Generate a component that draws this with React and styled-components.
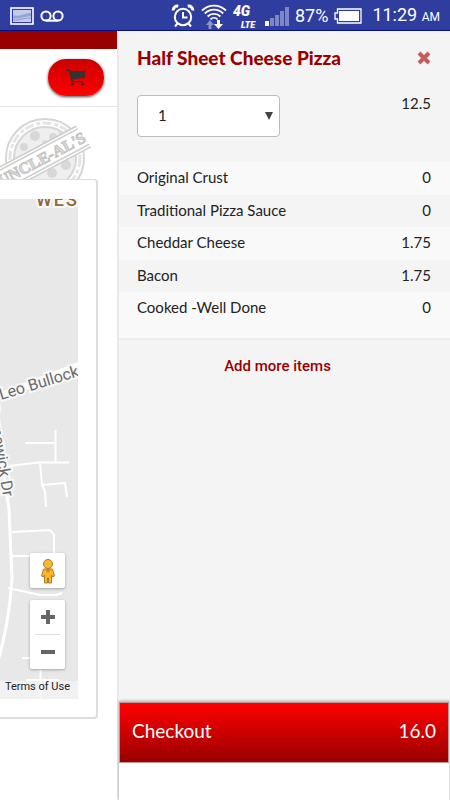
import React from 'react'
import styled, { createGlobalStyle } from 'styled-components'

const items = [
  { name: 'Original Crust', price: '0' },
  { name: 'Traditional Pizza Sauce', price: '0' },
  { name: 'Cheddar Cheese', price: '1.75' },
  { name: 'Bacon', price: '1.75' },
  { name: 'Cooked -Well Done', price: '0' },
]

function StatusBar() {
  return (
    <Status>
      <StatusGroup>
        <svg width="24" height="18" viewBox="0 0 24 18">
          <rect x="1" y="1" width="22" height="16" fill="#2f3d9f" stroke="#fff" strokeWidth="1.6" />
          <rect x="3" y="3" width="18" height="12" fill="#c3cbea" />
          <path d="M3 8c6 3 12-3 18-2v3c-7 0-11 4-18 2z" fill="#97a4d6" />
          <path d="M3 13c6 1 12-3 18-2" stroke="#8d9ad0" fill="none" />
        </svg>
        <svg width="24" height="12" viewBox="0 0 24 12" fill="none" stroke="#fff" strokeWidth="2">
          <circle cx="6" cy="6" r="4.6" />
          <circle cx="18" cy="6" r="4.6" />
          <path d="M6 10.7h12" />
        </svg>
      </StatusGroup>
      <StatusGroup>
        <svg width="24" height="24" viewBox="0 0 24 24" fill="none" stroke="#fff" strokeWidth="2">
          <circle cx="12" cy="13" r="8.2" />
          <path d="M12 8v5.5h4.5M6.5 19.5L4 22.500M17.500 19.500L20 22.500" />
          <path d="M2.200 6.500a4 4 0 0 1 5-4.300M21.800 6.500a4 4 0 0 0-5-4.300" strokeWidth="3" />
        </svg>
        <svg width="26" height="26" viewBox="0 0 26 26" fill="none" stroke="#fff" strokeWidth="1.8">
          <path d="M1 7.500a17 17 0 0 1 24 0M3.800 10.500a13 13 0 0 1 18.400 0M6.600 13.500a9 9 0 0 1 12.800 0M9.500 16.300a5 5 0 0 1 7 0" />
          <path d="M9 17l4 5h-2.500v4h-3v-4H5z" fill="#8a93cc" stroke="none" />
          <path d="M17.500 26l-4.500-5h3v-4h3v4h3z" fill="#fff" stroke="none" />
        </svg>
        <Network>4G<small>LTE</small></Network>
        <svg width="24" height="19" viewBox="0 0 24 19" fill="#7d87c6">
          <rect x="0" y="14" width="4" height="5" fill="#fff" />
          <rect x="5" y="11" width="4" height="8" />
          <rect x="10" y="8" width="4" height="11" />
          <rect x="15" y="4" width="4" height="15" />
          <rect x="20" y="0" width="4" height="19" />
        </svg>
        <Percent>87%</Percent>
        <svg width="28" height="16" viewBox="0 0 28 16">
          <path d="M3.500 1H27v14H3.500v-4H1V5h2.500z" fill="none" stroke="#fff" strokeWidth="1.300" />
          <rect x="5" y="3" width="20" height="10" fill="#fff" />
        </svg>
        <Clock>11:29 <small>AM</small></Clock>
      </StatusGroup>
    </Status>
  )
}

function Stamp() {
  return (
    <StampArea viewBox="0 0 96 72" role="img" aria-label="Uncle Al's">
      <g fill="none" stroke="#d6d6d6">
        <circle cx="45" cy="51" r="39" strokeWidth="2" />
        <circle cx="45" cy="51" r="35" strokeWidth="3" stroke="#e4e4e4" strokeDasharray="9 3 4 2" />
        <circle cx="45" cy="51" r="31" strokeWidth="2" fill="#efefef" />
      </g>
      <g fill="#d8d8d8">
        <circle cx="35" cy="29" r="5" />
        <circle cx="53" cy="30" r="4" />
        <circle cx="24" cy="40" r="4" />
        <circle cx="45" cy="36" r="3" />
        <circle cx="66" cy="58" r="5" />
        <circle cx="52" cy="66" r="5" />
        <path d="M38 40l8-5 3 3-8 5zM58 24l5 4-3 2z" />
      </g>
      <g transform="rotate(-28 44 50)">
        <rect x="-6" y="38" width="98" height="25" fill="#fff" />
        <path d="M-6 38H87M-5 41H87M-4 60h94M-4 63h94" stroke="#cdcdcd" strokeWidth="1.500" />
        <text x="41" y="56" textAnchor="middle" fontFamily="Liberation Serif, serif" fontWeight="700" fontSize="16" fill="#dcdcdc" stroke="#c4c4c4" strokeWidth="1">UNCLE-AL'S</text>
      </g>
    </StampArea>
  )
}

function RoadMap() {
  return (
    <Map>
      <Roads viewBox="0 0 78 501" preserveAspectRatio="xMaxYMin slice">
        <g fill="none" stroke="#fff" strokeWidth="2">
          <path d="M0 197L80 166" strokeWidth="7" />
          <path d="M-4 225L9 310L12 380Q9 425-2 462" strokeWidth="3" />
          <path d="M9 267L38 263.500H69M25 244H55M55.500 231V263M40 263L42 286L45 292L46 308M42 286L65 284L67 298" />
          <path d="M12 333L50 331L54 336V355M12 357H34M8 389L40 396H56L62 394M22 459H32M26 481H59M40.500 471V501" />
        </g>
        <MapLabel x="1" y="201" transform="rotate(-17 1 201)">Leo Bullock</MapLabel>
        <MapLabel x="-13" y="206" transform="rotate(80 -13 206)">Brunswick Dr</MapLabel>
        <Town x="36" y="7">WES</Town>
      </Roads>
      <MapControls>
        <MapButton aria-label="Street View">
          <svg width="16" height="26" viewBox="0 0 16 26">
            <circle cx="8" cy="6" r="4.500" fill="#fbb829" stroke="#a87d2f" />
            <path d="M3.500 11h9l2 7-2 1-1-2v8h-3v-5h-1v5h-3v-8l-1 2-2-1z" fill="#fbb829" stroke="#a87d2f" />
            <path d="M5 11h6l-3 4z" fill="#e77a25" />
          </svg>
        </MapButton>
        <ZoomBox>
          <ZoomButton aria-label="Zoom in">
            <svg width="14" height="14" viewBox="0 0 14 14"><path d="M7 0v14M0 7h14" stroke="#666" strokeWidth="4" /></svg>
          </ZoomButton>
          <ZoomButton aria-label="Zoom out">
            <svg width="14" height="14" viewBox="0 0 14 14"><path d="M0 7h14" stroke="#666" strokeWidth="4" /></svg>
          </ZoomButton>
        </ZoomBox>
      </MapControls>
      <Terms href="#terms">Terms of Use</Terms>
    </Map>
  )
}

function OrderDrawer() {
  return (
    <Drawer>
      <DrawerHeader>
        <Title>Half Sheet Cheese Pizza</Title>
        <CloseButton aria-label="Remove">
          <svg width="14" height="14" viewBox="0 0 14 14"><path d="M2 2l10 10M12 2L2 12" stroke="#c75c5c" strokeWidth="4" /></svg>
        </CloseButton>
      </DrawerHeader>
      <QuantityRow>
        <SelectWrap>
          <Select aria-label="Quantity" defaultValue="1">
            <option>1</option>
            <option>2</option>
            <option>3</option>
          </Select>
          <svg width="8" height="8" viewBox="0 0 8 8"><path d="M0 0h8L4 8z" fill="#444" /></svg>
        </SelectWrap>
        <span>12.5</span>
      </QuantityRow>
      <ItemsBox>
        <Items>
          <tbody>
            {items.map((item) => (
              <tr key={item.name}>
                <td>{item.name}</td>
                <td>{item.price}</td>
              </tr>
            ))}
          </tbody>
        </Items>
      </ItemsBox>
      <AddMore>Add more items</AddMore>
      <Footer>
        <Checkout>
          <span>Checkout</span>
          <span>16.0</span>
        </Checkout>
      </Footer>
    </Drawer>
  )
}

function App() {
  return (
    <Screen>
      <GlobalStyle />
      <StatusBar />
      <Content>
        <Page>
          <TopStrip />
          <PageHeader>
            <CartButton aria-label="Cart">
              <svg width="20" height="17" viewBox="0 0 20 17" fill="#333">
                <path d="M0 .5h4l.8 1.500H19V8.500L6.500 10.500l.4 1.500H17v1.200H5.500L3.200 2H0z" />
                <rect x="5" y="14" width="3" height="2.500" />
                <rect x="15" y="14" width="3" height="2.500" />
              </svg>
            </CartButton>
          </PageHeader>
          <Stamp />
          <MapCard>
            <RoadMap />
          </MapCard>
        </Page>
        <OrderDrawer />
      </Content>
    </Screen>
  )
}

const GlobalStyle = createGlobalStyle`
* {
  box-sizing: border-box;
}
body {
  margin: 0;
  background: white;
  font-family: Lato, sans-serif;
  font-size: 15px;
}
button {
  font: inherit;
  border: none;
  padding: 0;
  cursor: pointer;
}
svg {
  display: block;
  flex-shrink: 0;
}
`;

const Screen = styled.div`
display: flex;
flex-direction: column;
min-height: 100vh;
`;

const Status = styled.header`
display: flex;
align-items: center;
justify-content: space-between;
height: 31px;
padding: 2px 10px 0;
color: white;
background-color: #2f3d9f;
border-bottom: 1px solid #00108c;
font-family: Roboto, sans-serif;
`;
const StatusGroup = styled.div`
display: flex;
align-items: center;
gap: 6px;
`;
const Network = styled.div`
display: flex;
flex-direction: column;
width: 26px;
font: italic 900 14px/17px Roboto, sans-serif;
small{
  font-size: 9px;
  line-height: 10px;
  padding-left: 8px;
}
`;
const Percent = styled.span`
font-size: 18px;
line-height: 24px;
`;
const Clock = styled.span`
font-size: 18px;
line-height: 24px;
margin-left: 4px;
white-space: nowrap;
small{
  font-size: 12px;
}
`;

const Content = styled.main`
flex: 1;
display: grid;
grid-template-columns: 26fr 74fr;
`;

const Page = styled.section`
display: flex;
flex-direction: column;
min-width: 0;
overflow: hidden;
background-color: white;
`;
const TopStrip = styled.div`
height: 18px;
background-color: #990000;
`;
const PageHeader = styled.div`
display: flex;
justify-content: flex-end;
height: 58px;
padding: 10px 13px 0 0;
border-bottom: 1px solid #e5e5e5;
`;
const CartButton = styled.button`
display: flex;
align-items: center;
justify-content: center;
width: 56px;
height: 37px;
border-radius: 18px;
background: linear-gradient(#cc0000, #ff0000);
box-shadow: 0 1px 3px rgba(0, 0, 0, 0.7);
`;
const StampArea = styled.svg`
width: 96px;
height: 72px;
`;
const MapCard = styled.div`
height: 540px;
margin-right: 19px;
padding: 19px 18px 18px 0;
border: 1px solid #dddddd;
border-width: 1px 2px 2px 0;
border-radius: 0 4px 4px 0;
`;
const Map = styled.div`
position: relative;
height: 100%;
background-color: #e8e8e8;
overflow: hidden;
`;
const Roads = styled.svg`
width: 100%;
height: 100%;
`;
const MapLabel = styled.text`
font-family: Roboto, sans-serif;
font-size: 16px;
fill: #6a6a6a;
stroke: #f8f8f8;
stroke-width: 4px;
paint-order: stroke;
`;
const Town = styled(MapLabel)`
font-size: 18px;
font-weight: 500;
letter-spacing: 2px;
fill: #8f6b34;
`;
const MapControls = styled.div`
position: absolute;
right: 13px;
bottom: 30px;
display: flex;
flex-direction: column;
gap: 12px;
`;
const MapButton = styled.button`
display: flex;
align-items: center;
justify-content: center;
width: 35px;
height: 35px;
border-radius: 2px;
background-color: white;
box-shadow: 0 1px 3px rgba(0, 0, 0, 0.3);
`;
const ZoomBox = styled.div`
width: 35px;
padding: 0 5px;
border-radius: 2px;
background-color: white;
box-shadow: 0 1px 3px rgba(0, 0, 0, 0.3);
`;
const ZoomButton = styled.button`
display: flex;
align-items: center;
justify-content: center;
width: 100%;
height: 34px;
background: none;
& + &{
  height: 35px;
  border-top: 1px solid #dddddd;
}
`;
const Terms = styled.a`
position: absolute;
right: 0;
bottom: 0;
width: 100%;
height: 18px;
padding-right: 8px;
text-align: right;
white-space: nowrap;
font: 11px/12px Roboto, sans-serif;
color: #222222;
text-decoration: none;
background-color: rgba(245, 245, 245, 0.7);
`;

const Drawer = styled.aside`
display: flex;
flex-direction: column;
min-width: 0;
border-left: 2px solid #e9e9e9;
background-color: #f4f4f4;
color: #222222;
`;
const DrawerHeader = styled.div`
display: flex;
align-items: center;
justify-content: space-between;
padding: 15px 19px 0 18px;
`;
const Title = styled.h1`
margin: 0;
font-size: 19px;
line-height: 24px;
font-weight: 900;
white-space: nowrap;
color: #990000;
`;
const CloseButton = styled.button`
background: none;
`;
const QuantityRow = styled.div`
display: flex;
justify-content: space-between;
padding: 25px 19px 25px 18px;
line-height: 16px;
`;
const SelectWrap = styled.div`
position: relative;
svg{
  position: absolute;
  right: 7px;
  top: 17px;
  pointer-events: none;
}
`;
const Select = styled.select`
display: block;
appearance: none;
width: 143px;
height: 42px;
padding: 0 20px 2px;
border: 1px solid #bbbbbb;
border-radius: 4px;
background-color: white;
color: #222222;
font: inherit;
`;
const ItemsBox = styled.div`
padding-bottom: 13px;
background-color: #f9f9f9;
border-bottom: 2px solid #ebebeb;
`;
const Items = styled.table`
width: 100%;
border-collapse: collapse;
tr{
  height: 33px;
}
tr:nth-child(even){
  height: 32px;
  background-color: #f4f4f4;
}
td{
  padding: 0 19px 3px 18px;
}
td:last-child{
  text-align: right;
}
`;
const AddMore = styled.button`
margin: 16px 14px 0 0;
background: none;
color: #990000;
font: 500 15px/20px Roboto, sans-serif;
`;
const Footer = styled.div`
margin-top: auto;
height: 98px;
background-color: white;
border-right: 1px solid #dddddd;
box-shadow: 0 -1px 3px rgba(0, 0, 0, 0.3);
`;
const Checkout = styled.button`
display: flex;
align-items: center;
justify-content: space-between;
width: 100%;
height: 61px;
padding: 0 12px 4px;
border: 1px solid #b99;
color: white;
font-size: 19px;
background: linear-gradient(#ff0000, #990000);
`;

export default App
